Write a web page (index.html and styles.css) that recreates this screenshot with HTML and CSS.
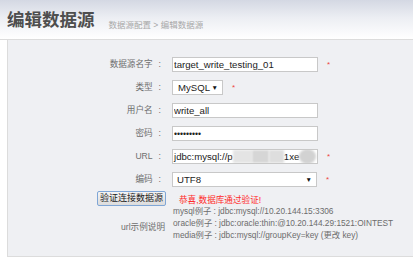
FILE: index.html
```html
<!DOCTYPE html>
<html lang="zh-CN">
<head>
  <meta charset="UTF-8">
  <meta name="viewport" content="width=device-width, initial-scale=1.0">
  <title>编辑数据源</title>
  <link rel="stylesheet" href="styles.css">
</head>
<body>
  <div class="page_header">
    <h1>编辑数据源</h1>
    <p class="crumb">数据源配置 &gt; 编辑数据源</p>
  </div>

  <div class="panel">
    <div class="form">
      <label class="form_label">数据源名字<span class="colon">:</span></label>
      <div class="form_value">
        <input class="text_input" type="text" value="target_write_testing_01">
        <span class="star">*</span>
      </div>

      <label class="form_label">类型<span class="colon">:</span></label>
      <div class="form_value">
        <div class="fake_select small">
          <span>MySQL</span><span class="arrow">▼</span>
        </div>
        <span class="star">*</span>
      </div>

      <label class="form_label">用户名<span class="colon">:</span></label>
      <div class="form_value">
        <input class="text_input" type="text" value="write_all">
      </div>

      <label class="form_label">密码<span class="colon">:</span></label>
      <div class="form_value">
        <input class="text_input pwd" type="password" value="123456789">
      </div>

      <label class="form_label">URL<span class="colon">:</span></label>
      <div class="form_value">
        <div class="text_input url_box">
          <span>jdbc:mysql://p</span>
          <span class="blur b1"></span>
          <span class="blur b2"></span>
          <span class="blur b3"></span>
          <span>1xe</span>
          <span class="blur b4"></span>
        </div>
        <span class="star">*</span>
      </div>

      <label class="form_label">编码<span class="colon">:</span></label>
      <div class="form_value">
        <div class="fake_select wide">
          <span>UTF8</span><span class="arrow">▼</span>
        </div>
        <span class="star">*</span>
      </div>

      <div class="form_label btn_cell">
        <button class="check_btn">验证连接数据源</button>
      </div>
      <div class="form_value msg_cell">
        <span class="ok_msg">恭喜,数据库通过验证!</span>
      </div>

      <label class="form_label mid">url示例说明</label>
      <div class="examples">
        <p>mysql例子 : jdbc:mysql://10.20.144.15:3306</p>
        <p>oracle例子 : jdbc:oracle:thin:@10.20.144.29:1521:OINTEST</p>
        <p>media例子 : jdbc:mysql://groupKey=key (更改 key)</p>
      </div>
    </div>
  </div>
</body>
</html>
```

FILE: styles.css
```css
* {
  margin: 0;
  padding: 0;
  box-sizing: border-box;
}
body {
  background: #fff;
  font-family: "Liberation Sans", "Noto Sans CJK SC", sans-serif;
  color: #666;
}
.page_header {
  height: 40px;
  display: flex;
  align-items: flex-end;
  padding: 0 0 8px 7px;
  background: linear-gradient(#d4d8e3, #eceef3 45%, #fff);
  border-bottom: 1px solid #dcdcdc;
}
.page_header h1 {
  font-size: 17.5px;
  line-height: 22px;
  font-weight: bold;
  color: #4e4e4e;
}
.crumb {
  font-size: 8.5px;
  line-height: 12px;
  margin-left: 14px;
  color: #a8a8a8;
}
.panel {
  margin-left: 7px;
  height: 217px;
  background: #eff0f3;
  border-left: 1px solid #dcdcdc;
  border-bottom: 1px solid #dcdcdc;
  padding-top: 17px;
}
.form {
  display: grid;
  grid-template-columns: 157px 1fr;
  column-gap: 7px;
  row-gap: 8px;
  align-items: center;
}
.form_label {
  font-size: 8.6px;
  line-height: 15px;
  text-align: right;
  color: #6e6e6e;
  padding-right: 4px;
}
.colon {
  margin-left: 6px;
}
.form_value {
  display: flex;
  align-items: center;
  height: 15px;
}
.text_input {
  width: 146px;
  height: 15px;
  border: 1px solid #c8c8c8;
  background: #fff;
  font-family: "Liberation Sans", sans-serif;
  font-size: 9.6px;
  color: #222;
  padding: 0 1px;
  outline: none;
}
.pwd {
  font-size: 8.6px;
}
.url_box {
  display: flex;
  align-items: center;
  overflow: hidden;
  line-height: 13px;
}
.blur {
  display: inline-block;
  height: 13px;
  background: #dcdcdc;
  filter: blur(1px);
}
.b1 { width: 20px; background: #e4e4e4; }
.b2 { width: 17px; background: #d6d6d6; }
.b3 { width: 15px; background: #dedede; }
.b4 { width: 17px; height: 15px; border-radius: 50%; background: #d2d2d2; }
.star {
  color: #ee4444;
  font-size: 8px;
  margin-left: 9px;
  line-height: 8px;
}
.fake_select {
  height: 15px;
  border: 1px solid #c8c8c8;
  background: #fff;
  display: flex;
  align-items: center;
  justify-content: space-between;
  padding: 0 4px 0 5px;
  font-size: 9.6px;
  color: #222;
}
.fake_select.small {
  width: 51px;
}
.fake_select.wide {
  width: 145px;
  padding-left: 4px;
}
.arrow {
  font-size: 6.5px;
  color: #111;
}
.btn_cell {
  display: flex;
  justify-content: flex-end;
  padding-right: 0;
  margin: -4px -1px 0 0;
}
.msg_cell {
  margin-top: -4px;
}
.check_btn {
  height: 15px;
  padding: 0 2px;
  border: 1px solid #7fa6d6;
  border-radius: 2px;
  background: linear-gradient(#f4f4f4, #dcdcdc);
  font-family: "Liberation Sans", "Noto Sans CJK SC", sans-serif;
  font-size: 9px;
  line-height: 13px;
  color: #222;
}
.ok_msg {
  margin-left: 7px;
  font-size: 8.6px;
  color: #ff2a2a;
}
.form_label.mid {
  align-self: center;
  padding-right: 0;
}
.examples {
  margin-top: -9px;
  font-size: 8.3px;
  line-height: 12px;
  color: #6c6c6c;
  padding-left: 1px;
}
```
